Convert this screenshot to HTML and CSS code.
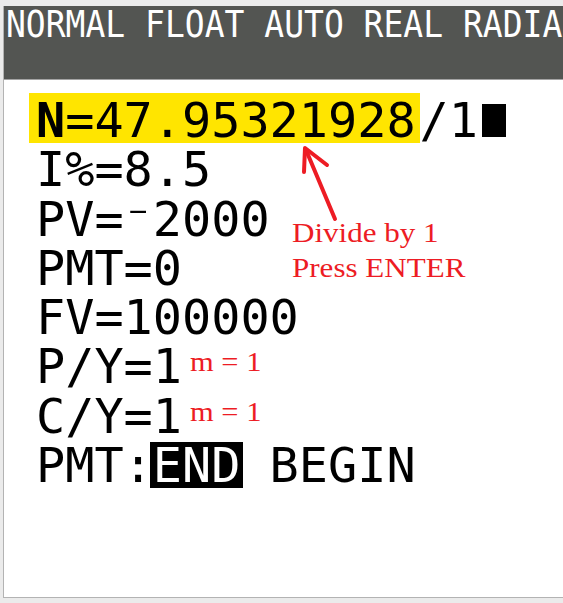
FILE: index.html
```html
<!DOCTYPE html>
<html>
<head>
<meta charset="utf-8">
<link rel="stylesheet" href="styles.css">
</head>
<body>
<div class="frame">
  <div class="status"><span class="status-text">NORMAL FLOAT AUTO REAL RADIAN MP</span></div>
  <div class="screen">
    <div class="line"><span class="hl"><b>N</b>=47.95321928</span>/1<span class="cursor"></span></div>
    <div class="line">I%=8.5</div>
    <div class="line">PV=<span class="neg">⁻</span>2000</div>
    <div class="line">PMT=0</div>
    <div class="line">FV=100000</div>
    <div class="line">P/Y=1<span class="note">m = 1</span></div>
    <div class="line">C/Y=1<span class="note">m = 1</span></div>
    <div class="line">PMT:<span class="inv">END</span> BEGIN</div>
  </div>
  <svg class="arrow" width="60" height="95" viewBox="0 0 60 95">
    <path d="M40 85 L11 16" />
    <path d="M9 38 L10 14 L32 31" />
  </svg>
  <div class="callout">Divide by 1<br>Press ENTER</div>
</div>
</body>
</html>
```
FILE: styles.css
```css
html, body {
  margin: 0;
  padding: 0;
}
body {
  background: #ebebeb;
  width: 563px;
  height: 603px;
  overflow: hidden;
}
.frame {
  position: relative;
  margin: 6px 0 0 3px;
  width: 600px;
  border-left: 1px solid #b3b3b3;
  border-bottom: 1px solid #b3b3b3;
}
.status {
  height: 73px;
  padding: 0 0 0 2px;
  background: #535552;
  border-bottom: 1px solid #a4a4a4;
  color: #ffffff;
  font-family: "DejaVu Sans Mono", monospace;
  font-size: 33px;
  line-height: 33px;
  white-space: nowrap;
  overflow: hidden;
}
.status-text {
  display: inline-block;
  transform: scaleY(1.12);
  transform-origin: left top;
}
.screen {
  height: 501px;
  padding: 16px 0 0 32px;
  background: #ffffff;
  font-family: "DejaVu Sans Mono", monospace;
  font-size: 48.5px;
  line-height: 49.3px;
  color: #000000;
  white-space: nowrap;
}
.line {
  height: 49.3px;
}
.hl {
  margin-left: -7px;
  padding: 0 4px 0 7px;
  background: linear-gradient(#ffe500, #ffe500) 0 1px / 100% 50px no-repeat;
}
.hl b {
  font-weight: bold;
}
.cursor {
  display: inline-block;
  width: 24px;
  height: 33px;
  margin-left: 4px;
  background: #000000;
}
.inv {
  margin: 0 -3px;
  padding: 0 3px;
  color: #ffffff;
  background: linear-gradient(#000, #000) 0 5px / 100% 46px no-repeat;
}
.note {
  display: inline-block;
  margin-left: 8px;
  vertical-align: 12px;
  font-family: "Liberation Serif", serif;
  font-size: 27px;
  line-height: 27px;
  color: #ed1c24;
  transform: scaleX(1.13);
  transform-origin: left center;
}
.arrow {
  position: absolute;
  left: 291px;
  top: 128px;
  fill: none;
  stroke: #ed1c24;
  stroke-width: 4;
  stroke-linecap: round;
  stroke-linejoin: round;
}
.callout {
  position: absolute;
  left: 288px;
  top: 210px;
  font-family: "Liberation Serif", serif;
  font-size: 27px;
  line-height: 35px;
  color: #ed1c24;
  white-space: nowrap;
  transform: scaleX(1.15);
  transform-origin: left top;
}
```
